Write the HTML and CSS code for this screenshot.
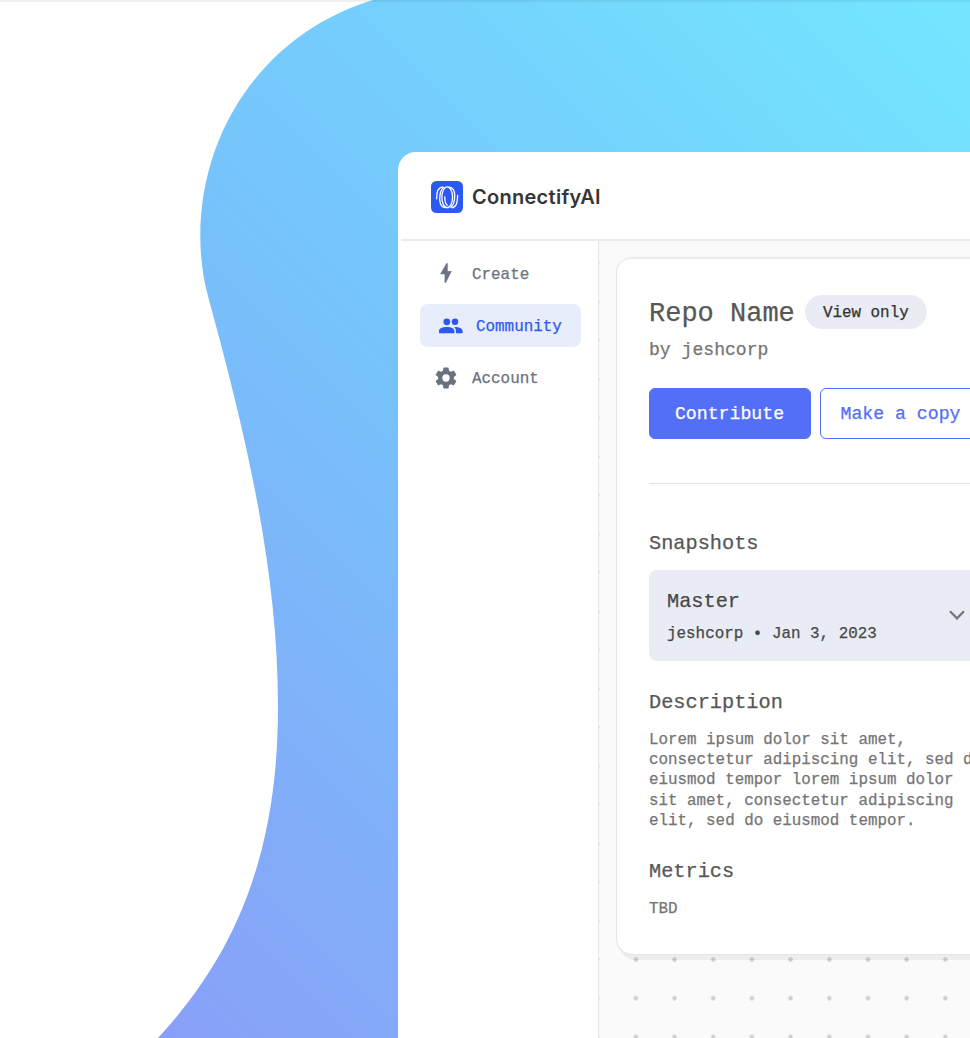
FILE: index.html
```html
<!DOCTYPE html>
<html lang="en">
<head>
<meta charset="utf-8">
<title>ConnectifyAI</title>
<link rel="stylesheet" href="styles.css">
</head>
<body>
<div class="stage">
  <svg class="blob" viewBox="0 0 970 1038" width="970" height="1038" aria-hidden="true">
    <defs>
      <linearGradient id="sky" gradientUnits="userSpaceOnUse" x1="970" y1="0" x2="30" y2="940">
        <stop offset="0" stop-color="#73e7ff"/>
        <stop offset=".5" stop-color="#76c3fb"/>
        <stop offset="1" stop-color="#8a9ef8"/>
      </linearGradient>
    </defs>
    <path fill="url(#sky)" d="M970 0H373C265 33 200.300 130 200.300 236C200.300 258 203 279 209 300C246 435 278 570 278 707C278 850 238 952 158 1038H970Z"/>
  </svg>
  <div class="topline"></div>
  <main class="window">
    <header class="header">
      <svg class="logo" viewBox="0 0 32 32" width="32" height="32">
        <rect width="32" height="32" rx="5.500" fill="#2d59f3"/>
        <g fill="none" stroke="#fff" stroke-width="1.300" stroke-linecap="round">
          <ellipse cx="16.200" cy="16.300" rx="5.400" ry="10.400"/>
          <path d="M5.600 17.800C5.600 10.500 7.600 6.200 11.500 6"/>
          <path d="M8.700 18.600C8.700 12.500 9.800 8.500 12.500 6.500M8.700 18.600C9 23.500 11 26.500 14.500 26.700"/>
          <path d="M26.600 14.400C26.600 22 24.500 26.600 20.800 26.700"/>
          <path d="M18 6.200C21.800 6.500 23.700 9.700 23.700 14.600C23.700 20 22.500 24.300 19.800 26.200"/>
          <path d="M13.800 16C13.800 20.500 14.500 23 16.300 24.200"/>
        </g>
      </svg>
      <span class="brand">ConnectifyAI</span>
    </header>
    <div class="body">
      <nav class="sidebar">
        <a class="item">
          <svg class="icon bolt" viewBox="0 0 12 20" width="12" height="20"><path fill="currentColor" stroke="currentColor" stroke-width=".5" stroke-linejoin="round" d="M6.600.4.500 11H4.900V19.600H5.800L11.400 8.300H7.400V.4Z"/></svg>
          <span>Create</span>
        </a>
        <a class="item active">
          <svg class="icon people" viewBox="0 0 24 16" width="24" height="16"><g fill="currentColor"><circle cx="7.800" cy="3.800" r="3.400"/><circle cx="16" cy="3.800" r="3.300"/><path d="M0 15.200V12.900C0 10.300 3.800 9 7.800 9S15.400 10.300 15.400 12.900V15.200ZM16.900 15.200V12.900C16.900 11.300 16.200 10.100 15.100 9.100C19.200 8.900 23.600 10.200 23.600 12.900V15.200Z"/></g></svg>
          <span>Community</span>
        </a>
        <a class="item">
          <svg class="icon gear" viewBox="2 2 20 20" width="22" height="22"><path fill="currentColor" fill-rule="evenodd" d="M19.140 12.940c.04-.3.060-.61.060-.94s-.020-.64-.070-.94l2.030-1.580a.49.490 0 0 0 .12-.61l-1.920-3.320a.488.488 0 0 0-.59-.22l-2.390.96a7 7 0 0 0-1.620-.94l-.36-2.540a.484.484 0 0 0-.48-.41h-3.840a.48.480 0 0 0-.47.410l-.36 2.540c-.59.240-1.130.57-1.620.94l-2.390-.96a.48.480 0 0 0-.59.220L2.740 8.870a.47.470 0 0 0 .12.610l2.030 1.580c-.05.300-.09.630-.09.940s.020.640.070.940l-2.030 1.580a.49.490 0 0 0-.12.610l1.920 3.320c.12.220.370.290.590.220l2.390-.96c.5.380 1.030.70 1.620.94l.36 2.540c.05.240.240.410.480.410h3.840c.24 0 .44-.17.470-.41l.36-2.540a7 7 0 0 0 1.620-.94l2.390.96c.22.080.470 0 .59-.22l1.920-3.320a.47.470 0 0 0-.12-.61zM12 15.300A3.300 3.300 0 1 1 12 8.700a3.300 3.300 0 0 1 0 6.600"/></svg>
          <span>Account</span>
        </a>
      </nav>
      <section class="canvas">
        <article class="panel">
          <div class="title-row">
            <h1 class="title">Repo Name</h1>
            <span class="pill">View only</span>
          </div>
          <div class="author">by jeshcorp</div>
          <div class="buttons">
            <button class="btn primary">Contribute</button>
            <button class="btn outline">Make a copy</button>
          </div>
          <hr class="divider">
          <h2 class="heading">Snapshots</h2>
          <div class="snapshot">
            <div>
              <div class="snap-name">Master</div>
              <div class="snap-meta">jeshcorp • Jan 3, 2023</div>
            </div>
            <svg class="chevron" viewBox="0 0 16 10" width="16" height="10"><path d="M1 1.200 8 8.400 15 1.200" fill="none" stroke="#777" stroke-width="2.300"/></svg>
          </div>
          <h2 class="heading description">Description</h2>
          <p class="text">Lorem ipsum dolor sit amet,<br>consectetur adipiscing elit, sed do<br>eiusmod tempor lorem ipsum dolor<br>sit amet, consectetur adipiscing<br>elit, sed do eiusmod tempor.</p>
          <h2 class="heading metrics">Metrics</h2>
          <p class="text">TBD</p>
        </article>
      </section>
    </div>
  </main>
</div>
</body>
</html>
```
FILE: styles.css
```css
* { box-sizing: border-box; }
body { margin: 0; background: #fff; }
h1, h2, p { margin: 0; font-weight: 400; }
.stage {
  position: relative;
  width: 970px;
  height: 1038px;
  padding: 152px 0 0 398px;
  overflow: hidden;
  font-family: "Liberation Mono", monospace;
  -webkit-text-stroke: .25px currentColor;
}
.blob { position: absolute; left: 0; top: 0; }
.topline {
  position: absolute;
  inset: 0 0 auto 0;
  height: 2px;
  background: rgba(0, 0, 0, .06);
}
.window {
  position: relative;
  display: flex;
  flex-direction: column;
  width: 780px;
  height: 886px;
  padding-left: 3px;
  background: #fff;
  border-radius: 18px 0 0 0;
}
.header {
  display: flex;
  align-items: center;
  gap: 9px;
  height: 89px;
  padding: 2px 0 0 30px;
  border-bottom: 2px solid #ebebeb;
}
.logo { flex: none; display: block; }
.brand {
  font: 600 20px/30px Inter, sans-serif;
  letter-spacing: .28px;
  color: #363636;
  -webkit-text-stroke: 0;
}
.body { flex: 1; display: flex; min-height: 0; }
.sidebar {
  flex: none;
  width: 198px;
  padding: 11px 17px 0 19px;
  border-right: 1px solid #e4e4e4;
}
.item {
  display: flex;
  align-items: center;
  height: 43px;
  margin-bottom: 9px;
  padding: 1px 0 0 15px;
  border-radius: 8px;
  font-size: 15.900px;
  color: #6a7282;
}
.item span { padding-top: 1px; }
.icon { flex: none; }
.bolt { margin: 0 20px 2px 5px; }
.people { margin: 0 13px 1px 4px; }
.gear { margin: 0 15px 1px 0; }
.active { background: #e8edfc; color: #2d59f3; }
.canvas {
  flex: 1;
  padding: 16px 0 0 17px;
  background-color: #fafafa;
  background-image: radial-gradient(circle at center, #cfcfcf 1.900px, transparent 2.500px);
  background-size: 38.700px 38.700px;
  background-position: 17.500px 2.800px;
}
.panel {
  height: 698px;
  padding: 36px 32px 0;
  background: #fff;
  border: 1px solid #e4e4e4;
  border-top: 2px solid #ececec;
  border-radius: 16px;
  box-shadow: 3px 5px 0 rgba(0, 0, 0, .05);
}
.title-row { display: flex; align-items: center; gap: 10px; height: 34px; }
.title { padding-top: 3px; font-size: 27px; line-height: 34px; color: #575757; }
.pill {
  width: 122px;
  height: 34px;
  border-radius: 17px;
  background: #e9ecf5;
  color: #333;
  font-size: 15.900px;
  line-height: 37px;
  text-align: center;
}
.author { margin-top: 9px; font-size: 18.100px; line-height: 24px; color: #757575; }
.buttons { display: flex; gap: 9px; margin-top: 26px; }
.btn {
  flex: none;
  width: 162px;
  height: 51px;
  padding: 0 1px 0 0;
  border: 1.500px solid #536ef7;
  border-radius: 6px;
  font: 18.200px/24px "Liberation Mono", monospace;
}
.primary { background: #536ef7; color: #fff; }
.outline { background: #fff; color: #536ef7; }
.divider { height: 1px; margin: 44px 0 46px; border: 0; background: #e3e3e3; }
.heading { font-size: 20.300px; line-height: 28px; color: #575757; }
.snapshot {
  display: flex;
  justify-content: space-between;
  align-items: center;
  width: 334px;
  height: 91px;
  margin-top: 12px;
  padding: 2px 18px 0;
  border-radius: 8px;
  background: #e9ecf4;
  color: #484848;
}
.snap-name { font-size: 20.300px; line-height: 26px; }
.snap-meta { margin-top: 8px; font-size: 15.900px; line-height: 22px; }
.chevron { flex: none; margin-bottom: 3px; }
.description { margin-top: 28px; }
.text { margin-top: 12.500px; font-size: 15.870px; line-height: 20.400px; color: #757575; white-space: nowrap; }
.metrics { margin-top: 26.500px; }
```
